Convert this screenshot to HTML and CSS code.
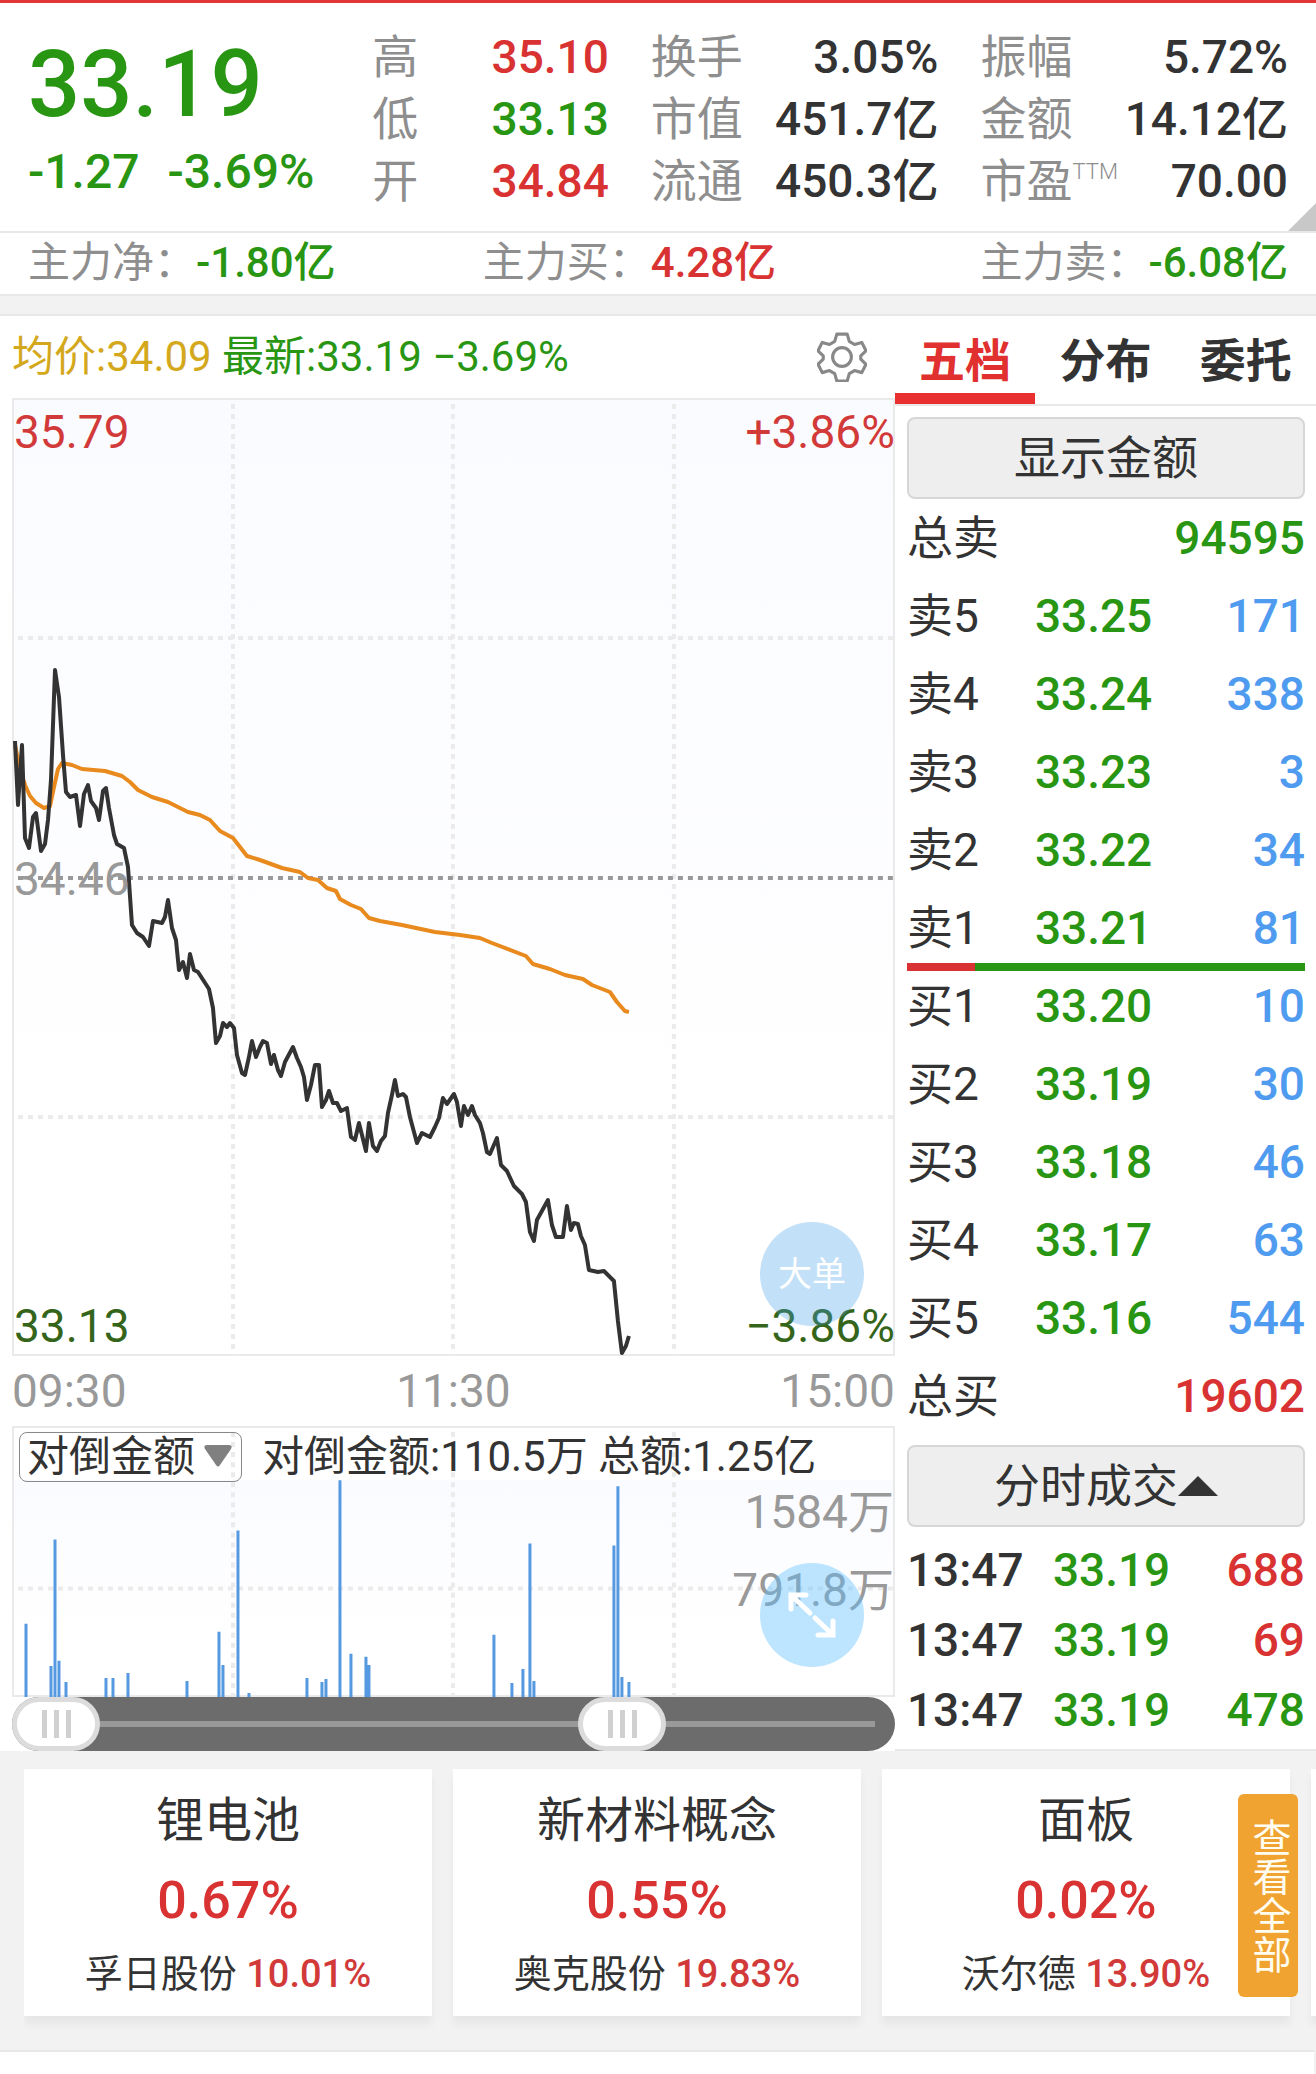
FILE: index.html
```html
<!DOCTYPE html>
<html lang="zh-CN">
<head>
    <meta charset="UTF-8">
    <meta name="viewport" content="width=device-width, initial-scale=1.0">
    <title>分时行情</title>
    <link rel="stylesheet" href="styles.css">
</head>
<body>
    <!-- Quote summary -->
    <header class="quote">
        <div class="quote-main down">
            <div class="price">33.19</div>
            <div class="change"><span>-1.27</span><span>-3.69%</span></div>
        </div>
        <div class="stats">
            <dl>
                <div><dt>高</dt><dd class="up">35.10</dd></div>
                <div><dt>低</dt><dd class="down">33.13</dd></div>
                <div><dt>开</dt><dd class="up">34.84</dd></div>
            </dl>
            <dl>
                <div><dt>换手</dt><dd>3.05%</dd></div>
                <div><dt>市值</dt><dd>451.7亿</dd></div>
                <div><dt>流通</dt><dd>450.3亿</dd></div>
            </dl>
            <dl>
                <div><dt>振幅</dt><dd>5.72%</dd></div>
                <div><dt>金额</dt><dd>14.12亿</dd></div>
                <div><dt>市盈<sup>TTM</sup></dt><dd>70.00</dd></div>
            </dl>
        </div>
        <span class="corner"></span>
    </header>

    <!-- Main capital flow -->
    <div class="funds">
        <div>主力净：<b class="down">-1.80亿</b></div>
        <div>主力买：<b class="up">4.28亿</b></div>
        <div>主力卖：<b class="down">-6.08亿</b></div>
    </div>

    <main class="board">
        <!-- Charts -->
        <section class="charts">
            <div class="chart-head">
                <p><span class="avg">均价:34.09</span> <span class="down">最新:33.19 −3.69%</span></p>
                <button class="gear" aria-label="设置">
                    <svg viewBox="0 0 48 48" width="50" height="50" fill="none" stroke="#888" stroke-width="3" stroke-linejoin="round">
                        <path d="M19 2h10l2 7 5 3 7-2 4 8-5 5v3l5 5-4 8-7-2-5 3-2 7H19l-2-7-5-3-7 2-4-8 5-5v-3l-5-5 4-8 7 2 5-3z"/>
                        <circle cx="24" cy="24" r="9"/>
                    </svg>
                </button>
            </div>

            <div class="chart price-chart">
                <svg viewBox="12 398 883 958" preserveAspectRatio="none">
                    <g class="grid">
                        <path d="M233 404V1356M453 404V1356M674 404V1356M18 638H894M18 1117H894"/>
                    </g>
                    <path class="mid" d="M18 878H894"/>
                    <polyline class="avg-line" points="15,745 20,770 25,785 30,796 36,803 44,808 50,806 54,787 58,769 62,763 72,765 82,769 105,771 122,776 130,782 138,790 152,797 168,802 188,812 200,815 210,820 220,831 233,838 247,856 260,860 282,868 300,872 308,878 318,880 327,888 336,891 340,899 351,905 361,909 369,918 380,921 402,925 435,932 460,935 480,938 492,943 526,956 533,964 550,969 565,975 583,979 592,985 610,992 617,1002 625,1011 629,1012"/>
                    <polyline class="price-line" points="15,741 18,805 22,745 25,838 29,848 33,817 36,813 41,851 45,844 48,820 51,780 55,670 59,697 63,755 66,792 70,797 76,795 80,826 84,794 88,785 91,801 96,808 99,820 103,791 106,788 109,808 114,835 117,844 124,848 128,867 132,925 137,933 143,937 149,946 153,921 162,923 165,917 168,900 172,928 176,940 179,970 183,962 187,978 190,954 194,970 198,972 209,989 213,1008 216,1043 220,1036 223,1023 227,1027 230,1023 234,1028 237,1055 242,1073 245,1075 249,1057 252,1041 256,1057 260,1047 263,1041 267,1043 271,1064 274,1055 278,1070 281,1076 285,1062 293,1047 297,1058 301,1067 304,1077 307,1100 311,1085 315,1065 319,1065 322,1107 326,1100 329,1091 333,1103 337,1103 341,1111 347,1108 351,1137 355,1140 359,1123 366,1151 369,1123 373,1146 377,1151 381,1141 385,1136 388,1113 392,1095 395,1080 398,1096 403,1094 406,1097 410,1117 417,1143 422,1133 430,1137 435,1127 439,1118 443,1098 447,1104 454,1094 457,1102 461,1126 464,1106 468,1115 472,1106 475,1115 480,1123 483,1133 487,1152 490,1154 497,1138 501,1165 507,1171 514,1186 522,1194 526,1202 530,1232 534,1241 537,1220 548,1200 552,1225 556,1237 563,1237 567,1206 571,1230 574,1223 578,1224 581,1236 585,1245 589,1270 598,1272 604,1271 614,1281 618,1321 622,1353 626,1346 629,1336"/>
                </svg>
                <span class="tag top-left up">35.79</span>
                <span class="tag top-right up">+3.86%</span>
                <span class="tag mid-left">34.46</span>
                <span class="tag bottom-left low">33.13</span>
                <span class="tag bottom-right low">−3.86%</span>
                <button class="round big-order">大单</button>
            </div>

            <div class="times"><span>09:30</span><span>11:30</span><span>15:00</span></div>

            <div class="chart volume-chart">
                <svg viewBox="12 1426 883 270" preserveAspectRatio="none">
                    <g class="grid">
                        <path d="M233 1432V1696M453 1432V1696M674 1432V1696M18 1588H894"/>
                    </g>
                    <path class="bars" d="M26 1696V1623M51 1696V1665M55 1696V1539M59 1696V1660M66 1696V1681M106 1696V1677M113 1696V1677M128 1696V1672M187 1696V1680M219 1696V1631M223 1696V1664M238 1696V1530M249 1696V1692M307 1696V1677M322 1696V1681M326 1696V1678M340 1696V1480M351 1696V1653M366 1696V1656M369 1696V1664M494 1696V1634M512 1696V1682M523 1696V1668M530 1696V1543M534 1696V1680M614 1696V1545M618 1696V1486M622 1696V1676M629 1696V1681"/>
                </svg>
                <div class="volume-head">
                    <span class="picker">
                        <select aria-label="指标">
                            <option>对倒金额</option>
                        </select>
                        <svg viewBox="0 0 28 24" width="28" height="24" fill="#808080"><path d="M3 1h22q4 0 2 4L16 21q-2 3-4 0L1 5Q-1 1 3 1z"/></svg>
                    </span>
                    <p>对倒金额:110.5万 总额:1.25亿</p>
                </div>
                <span class="tag volume-max">1584万</span>
                <span class="tag volume-mid">791.8万</span>
                <button class="round expand" aria-label="放大">
                    <svg viewBox="0 0 50 48" width="50" height="48" fill="none" stroke="#fff" stroke-width="5" stroke-linecap="round">
                        <path d="M4 4l19 18M4 18V4h15M28 27l18 17M46 30v14H31"/>
                    </svg>
                </button>
            </div>

            <div class="range">
                <input type="range" min="0" max="240" value="0" aria-label="开始时间">
                <input type="range" min="0" max="240" value="171" aria-label="结束时间">
            </div>
        </section>

        <!-- Order book -->
        <aside class="book">
            <nav class="tabs">
                <button class="active">五档</button>
                <button>分布</button>
                <button>委托</button>
            </nav>
            <div class="book-body">
                <button class="wide">显示金额</button>
                <table class="levels">
                    <colgroup><col class="col-label"><col><col></colgroup>
                    <tr><th colspan="2">总卖</th><td class="down">94595</td></tr>
                    <tr><th>卖5</th><td class="down">33.25</td><td>171</td></tr>
                    <tr><th>卖4</th><td class="down">33.24</td><td>338</td></tr>
                    <tr><th>卖3</th><td class="down">33.23</td><td>3</td></tr>
                    <tr><th>卖2</th><td class="down">33.22</td><td>34</td></tr>
                    <tr><th>卖1</th><td class="down">33.21</td><td>81</td></tr>
                </table>
                <div class="ratio"><span style="width: 17.2%"></span></div>
                <table class="levels">
                    <colgroup><col class="col-label"><col><col></colgroup>
                    <tr><th>买1</th><td class="down">33.20</td><td>10</td></tr>
                    <tr><th>买2</th><td class="down">33.19</td><td>30</td></tr>
                    <tr><th>买3</th><td class="down">33.18</td><td>46</td></tr>
                    <tr><th>买4</th><td class="down">33.17</td><td>63</td></tr>
                    <tr><th>买5</th><td class="down">33.16</td><td>544</td></tr>
                    <tr><th colspan="2">总买</th><td class="up">19602</td></tr>
                </table>
                <button class="wide trades-toggle">分时成交<svg viewBox="0 0 40 20" width="40" height="20"><path d="M20 0l20 20H0z" fill="#333"/></svg></button>
                <table class="trades">
                    <colgroup><col class="col-time"><col><col></colgroup>
                    <tr><td>13:47</td><td class="down">33.19</td><td class="up">688</td></tr>
                    <tr><td>13:47</td><td class="down">33.19</td><td class="up">69</td></tr>
                    <tr><td>13:47</td><td class="down">33.19</td><td class="down">478</td></tr>
                </table>
            </div>
        </aside>
    </main>

    <!-- Related sectors -->
    <section class="sectors">
        <div class="cards">
            <article class="card">
                <h3>锂电池</h3>
                <strong>0.67%</strong>
                <p>孚日股份 <b>10.01%</b></p>
            </article>
            <article class="card">
                <h3>新材料概念</h3>
                <strong>0.55%</strong>
                <p>奥克股份 <b>19.83%</b></p>
            </article>
            <article class="card">
                <h3>面板</h3>
                <strong>0.02%</strong>
                <p>沃尔德 <b>13.90%</b></p>
            </article>
            <article class="card"></article>
        </div>
        <button class="view-all">查看全部</button>
    </section>
    <div class="next-panel"></div>
</body>
</html>
```
FILE: styles.css
```css
* {
    box-sizing: border-box;
}

body {
    margin: 0;
    border-top: 3px solid #e23535;
    background: #f2f2f2;
    color: #333;
    font-family: Roboto, "Noto Sans CJK SC", sans-serif;
    font-size: 46px;
    line-height: 62px;
}

button {
    padding: 0;
    border: none;
    background: none;
    color: inherit;
    font: inherit;
    cursor: pointer;
}

dl, dd, p, h3 {
    margin: 0;
}

table {
    width: 100%;
    border-collapse: collapse;
    table-layout: fixed;
}

th, td {
    padding: 0;
    text-align: left;
}

.up {
    color: #d93232;
}

.down {
    color: #299613;
}

/* Quote summary */
.quote {
    position: relative;
    display: flex;
    padding: 23px 28px 19px;
    background: #fff;
    border-bottom: 2px solid #e8e8e8;
    font-weight: 500;
}

.quote-main {
    flex: 0 0 27%;
    margin-right: 4px;
}

.price {
    font-size: 92px;
    line-height: 118px;
}

.change {
    display: flex;
    gap: 28px;
    font-size: 48px;
    line-height: 56px;
}

.stats {
    flex: 1;
    display: grid;
    grid-template-columns: 237fr 288fr 308fr;
    gap: 42px;
}

.stats dl > div {
    display: flex;
    justify-content: space-between;
}

.stats dt {
    color: #8e8e8e;
    font-weight: 400;
}

.stats sup {
    font-size: 22px;
    font-weight: 300;
    line-height: 22px;
    vertical-align: 18px;
}

/* Folded corner at the end of the summary */
.corner {
    position: absolute;
    right: 0;
    bottom: 0;
    border: 14px solid #c8c8c8;
    border-top-color: transparent;
    border-left-color: transparent;
}

/* Capital flow row */
.funds {
    display: grid;
    grid-template-columns: 456fr 499fr auto;
    padding: 0 28px 2px;
    background: #fff;
    border-bottom: 2px solid #e8e8e8;
    color: #8e8e8e;
    font-size: 42px;
    line-height: 59px;
}

.funds b {
    font-weight: 500;
}

/* Charts and order book */
.board {
    display: flex;
    margin-top: 18px;
    background: #fff;
    border-top: 2px solid #e8e8e8;
}

.charts {
    flex: 1;
    display: flex;
    flex-direction: column;
    padding-left: 12px;
}

.chart-head {
    display: flex;
    justify-content: space-between;
    align-items: center;
    height: 82px;
    padding-right: 28px;
    font-size: 42px;
}

.avg {
    color: #d4a81c;
}

.gear,
.gear svg {
    display: block;
}

.chart {
    position: relative;
    border: 2px solid #eaeaea;
}

/* The drawing also covers the frame */
.chart > svg {
    position: absolute;
    top: -2px;
    left: -2px;
    width: calc(100% + 4px);
    height: calc(100% + 4px);
}

.price-chart {
    flex: 1;
    background: linear-gradient(#fafbff, #fff 80%);
}

.grid path {
    fill: none;
    stroke: #ebebeb;
    stroke-width: 4;
    stroke-dasharray: 5 5;
}

.mid {
    stroke: #999;
    stroke-width: 4;
    stroke-dasharray: 5 5;
}

.avg-line,
.price-line {
    fill: none;
    stroke: #333;
    stroke-width: 4;
    stroke-linejoin: round;
}

.avg-line {
    stroke: #e88a1d;
}

.bars {
    stroke: #5599e0;
    stroke-width: 3;
}

/* Scale labels drawn over the charts */
.tag {
    position: absolute;
    line-height: 56px;
    color: #999;
}

.tag.up {
    color: #d23a3a;
}

.tag.low {
    color: #35651b;
}

.top-left {
    top: 4px;
    left: 0;
}

.top-right {
    top: 4px;
    right: -2px;
}

.mid-left {
    top: 50%;
    left: 0;
    margin-top: -26px;
}

.bottom-left {
    bottom: 0;
    left: 0;
}

.bottom-right {
    right: -2px;
    bottom: 0;
}

.round {
    position: absolute;
    right: 29px;
    width: 104px;
    height: 104px;
    border-radius: 50%;
    color: #fff;
    font-size: 34px;
}

.big-order {
    bottom: 28px;
    background: rgba(65, 160, 230, 0.32);
}

.expand {
    bottom: 28px;
    background: rgba(90, 190, 255, 0.4);
}

.expand svg {
    display: block;
    margin: auto;
}

.times {
    display: flex;
    justify-content: space-between;
    color: #999;
    line-height: 70px;
}

.volume-chart {
    height: 271px;
    background: linear-gradient(#fff 52px, #fafbff 52px, #fff 80%);
}

.volume-head {
    position: relative;
    display: flex;
    align-items: center;
    gap: 20px;
    padding: 4px 5px;
    font-size: 42px;
    line-height: 50px;
}

.picker {
    position: relative;
}

.picker select {
    appearance: none;
    display: block;
    width: 223px;
    height: 50px;
    padding: 0 0 0 7px;
    border: 1px solid #888;
    border-radius: 8px;
    background: none;
    color: inherit;
    font: inherit;
    line-height: 46px;
}

.picker svg {
    position: absolute;
    top: 12px;
    right: 10px;
    pointer-events: none;
}

.volume-max {
    top: 56px;
    right: -1px;
}

.volume-mid {
    top: 134px;
    right: -1px;
}

/* Time range with two handles */
.range {
    display: grid;
    height: 54px;
    border-radius: 27px;
    background: linear-gradient(#999, #999) center / calc(100% - 40px) 6px no-repeat #6c6c6c;
}

.range input {
    appearance: none;
    grid-area: 1 / 1;
    width: 100%;
    height: 54px;
    margin: 0;
    background: none;
    pointer-events: none;
}

.range input::-webkit-slider-thumb {
    appearance: none;
    width: 88px;
    height: 54px;
    border: 5px solid #dcdcdc;
    border-radius: 27px;
    background:
        linear-gradient(#d0d0d0, #d0d0d0) 25px 8px / 5px 28px no-repeat,
        linear-gradient(#d0d0d0, #d0d0d0) 37px 8px / 5px 28px no-repeat,
        linear-gradient(#d0d0d0, #d0d0d0) 49px 8px / 5px 28px no-repeat,
        #fff;
    pointer-events: auto;
}

/* Order book */
.book {
    flex: 0 0 32%;
    border-bottom: 2px solid #e8e8e8;
}

.tabs {
    display: flex;
    border-bottom: 2px solid #e8e8e8;
}

.tabs button {
    flex: 1;
    padding: 14px 0 1px;
    border-bottom: 11px solid transparent;
    font-weight: 700;
}

.tabs .active {
    border-bottom-color: #e83030;
    color: #e03030;
}

.book-body {
    padding: 11px 11px 4px 12px;
}

.wide {
    display: flex;
    align-items: center;
    justify-content: center;
    width: 100%;
    height: 82px;
    border: 2px solid #d5d7d7;
    border-radius: 8px;
    background: #eee;
}

.levels tr {
    height: 78px;
}

.col-label {
    width: 128px;
}

.col-time {
    width: 146px;
}

.levels th {
    font-weight: 400;
}

.levels td {
    font-weight: 500;
}

.levels td:last-child {
    color: #4f9bf0;
    text-align: right;
}

.levels td.down:last-child {
    color: #299613;
}

.levels td.up:last-child {
    color: #d93232;
}

.ratio {
    position: relative;
    height: 8px;
    margin: -4px 0;
    background: #299613;
}

.ratio span {
    display: block;
    height: 100%;
    background: #d93232;
}

.trades-toggle {
    margin: 10px 0 8px;
}

.trades {
    font-weight: 500;
}

.trades tr {
    height: 70px;
}

.trades td:last-child {
    text-align: right;
}

/* Related sectors */
.sectors {
    position: relative;
    padding: 18px 0 34px 24px;
}

.cards {
    display: flex;
    gap: 21px;
    margin-bottom: -34px;
    padding-bottom: 34px;
    overflow: hidden;
}

/* Three cards and the edge of the fourth */
.card {
    flex: 0 0 calc((100% - 68px) / 3);
    min-height: 247px;
    padding: 20px 0 17px;
    background: #fff;
    box-shadow: 0 8px 8px rgba(0, 0, 0, 0.05);
    text-align: center;
}

.card h3 {
    font-size: 48px;
    font-weight: 400;
    line-height: 64px;
}

.card strong {
    display: block;
    color: #d93232;
    font-size: 52px;
    font-weight: 500;
    line-height: 96px;
}

.card p {
    font-size: 38px;
    line-height: 50px;
}

.card b {
    color: #d23a3a;
    font-weight: 500;
}

.view-all {
    position: absolute;
    top: 43px;
    right: 18px;
    width: 60px;
    height: 203px;
    border-radius: 6px;
    background: #f0a330;
    color: #fffdf0;
    font-size: 39px;
    line-height: 60px;
    writing-mode: vertical-rl;
}

.next-panel {
    height: 24px;
    margin-right: 2px;
    border-top: 2px solid #e8e8e8;
    background: #fff;
}
```
